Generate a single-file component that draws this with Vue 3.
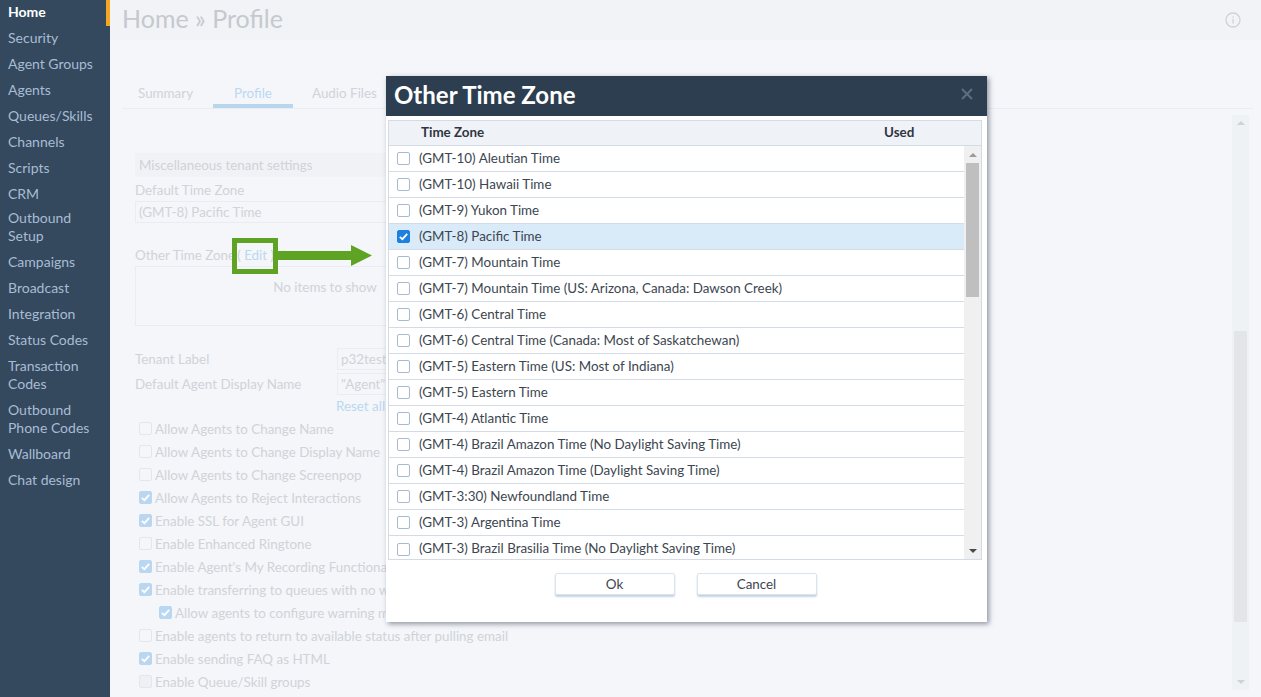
<script setup>
const navItems = [
  { label: 'Home', active: true },
  { label: 'Security' },
  { label: 'Agent Groups' },
  { label: 'Agents' },
  { label: 'Queues/Skills' },
  { label: 'Channels' },
  { label: 'Scripts' },
  { label: 'CRM' },
  { label: 'Outbound Setup', tight: true },
  { label: 'Campaigns' },
  { label: 'Broadcast' },
  { label: 'Integration' },
  { label: 'Status Codes' },
  { label: 'Transaction Codes' },
  { label: 'Outbound Phone Codes' },
  { label: 'Wallboard' },
  { label: 'Chat design' },
];

const options = [
  { label: 'Allow Agents to Change Name', on: false },
  { label: 'Allow Agents to Change Display Name', on: false },
  { label: 'Allow Agents to Change Screenpop', on: false },
  { label: 'Allow Agents to Reject Interactions', on: true },
  { label: 'Enable SSL for Agent GUI', on: true },
  { label: 'Enable Enhanced Ringtone', on: false },
  { label: "Enable Agent's My Recording Functionality", on: true },
  { label: 'Enable transferring to queues with no waiting agents', on: true },
  { label: 'Allow agents to configure warning message', on: true, nested: true },
  { label: 'Enable agents to return to available status after pulling email', on: false },
  { label: 'Enable sending FAQ as HTML', on: true },
  { label: 'Enable Queue/Skill groups', on: false, off: true },
];

const zones = [
  '(GMT-10) Aleutian Time',
  '(GMT-10) Hawaii Time',
  '(GMT-9) Yukon Time',
  '(GMT-8) Pacific Time',
  '(GMT-7) Mountain Time',
  '(GMT-7) Mountain Time (US: Arizona, Canada: Dawson Creek)',
  '(GMT-6) Central Time',
  '(GMT-6) Central Time (Canada: Most of Saskatchewan)',
  '(GMT-5) Eastern Time (US: Most of Indiana)',
  '(GMT-5) Eastern Time',
  '(GMT-4) Atlantic Time',
  '(GMT-4) Brazil Amazon Time (No Daylight Saving Time)',
  '(GMT-4) Brazil Amazon Time (Daylight Saving Time)',
  '(GMT-3:30) Newfoundland Time',
  '(GMT-3) Argentina Time',
  '(GMT-3) Brazil Brasilia Time (No Daylight Saving Time)',
];
const selectedZone = '(GMT-8) Pacific Time';
</script>

<template>
  <div class="app">
    <nav class="sidebar">
      <a v-for="item in navItems" :key="item.label" :class="['nav-item', { active: item.active, tight: item.tight }]">{{ item.label }}</a>
    </nav>

    <main class="main">
      <header class="topbar">
        <h1>Home » Profile</h1>
        <svg class="info" width="16" height="16" viewBox="0 0 16 16">
          <circle cx="8" cy="8" r="7" fill="none" stroke="#cfd2d6" stroke-width="1.3" />
          <rect x="7.4" y="7" width="1.3" height="4.5" fill="#cfd2d6" />
          <rect x="7.4" y="4.4" width="1.3" height="1.4" fill="#cfd2d6" />
        </svg>
      </header>

      <div class="tabs">
        <span class="tab first">Summary</span>
        <span class="tab current">Profile</span>
        <span class="tab last">Audio Files</span>
      </div>

      <div class="content">
        <section class="form">
          <div class="section-title">Miscellaneous tenant settings</div>
          <div class="label tz-label">Default Time Zone</div>
          <div class="input wide">(GMT-8) Pacific Time</div>

          <div class="other-label">
            <span>Other Time Zone</span>
            <span class="edit">( <a class="link">Edit</a> )</span>
          </div>
          <div class="empty-box">No items to show</div>

          <div class="field-row first">
            <span class="label">Tenant Label</span>
            <div class="input short">p32test</div>
          </div>
          <div class="field-row">
            <span class="label">Default Agent Display Name</span>
            <div class="input short">"Agent"</div>
          </div>
          <a class="link reset">Reset all</a>

          <ul class="options">
            <li v-for="opt in options" :key="opt.label" :class="{ nested: opt.nested }">
              <span :class="['box', { on: opt.on, off: opt.off }]">
                <svg v-if="opt.on" width="13" height="13" viewBox="0 0 13 13">
                  <path d="M2.8 6.8 5.4 9.2 10.2 3.9" fill="none" stroke="#fff" stroke-width="1.8" />
                </svg>
              </span>
              {{ opt.label }}
            </li>
          </ul>
        </section>

        <div class="page-scroll">
          <span class="arrow up"></span>
          <div class="page-track"><div class="page-thumb"></div></div>
          <span class="arrow down"></span>
        </div>
      </div>
    </main>

    <div class="callout"></div>
    <svg class="callout-arrow" width="96" height="21" viewBox="0 0 96 21">
      <path d="M0 6H75V0L96 10.5 75 21V15H0Z" fill="#5fa324" />
    </svg>

    <div class="modal">
      <div class="modal-head">
        <h2>Other Time Zone</h2>
        <svg class="close" width="12" height="12" viewBox="0 0 12 12">
          <path d="M1 1 11 11M11 1 1 11" stroke="#5f6e7e" stroke-width="2" />
        </svg>
      </div>
      <div class="grid">
        <div class="grid-head">
          <span class="col-zone">Time Zone</span>
          <span class="col-used">Used</span>
        </div>
        <div class="grid-body">
          <div class="rows">
            <div v-for="zone in zones" :key="zone" :class="['row', { selected: zone === selectedZone }]">
              <span class="check">
                <svg v-if="zone === selectedZone" width="13" height="13" viewBox="0 0 13 13">
                  <path d="M2.8 6.8 5.4 9.2 10.2 3.9" fill="none" stroke="#fff" stroke-width="1.8" />
                </svg>
              </span>
              <span class="zone-name">{{ zone }}</span>
            </div>
          </div>
          <div class="grid-scroll">
            <span class="arrow up dark"></span>
            <div class="grid-thumb"></div>
            <span class="arrow down dark"></span>
          </div>
        </div>
      </div>
      <div class="modal-foot">
        <button class="btn">Ok</button>
        <button class="btn">Cancel</button>
      </div>
    </div>
  </div>
</template>

<style>
html, body {
  margin: 0;
  overflow: hidden;
}
</style>

<style scoped>
.app {
  position: relative;
  display: flex;
  width: 1261px;
  height: 697px;
  overflow: hidden;
  background: #f4f6fa;
  font-family: Lato, "Noto Sans", sans-serif;
  font-size: 13.4px;
  color: #d0d3d7;
}
.sidebar {
  width: 110px;
  flex: none;
  background: #34495e;
  display: flex;
  flex-direction: column;
}
.nav-item {
  display: flex;
  align-items: center;
  box-sizing: border-box;
  min-height: 26px;
  padding: 3px 8px 5px;
  line-height: 18px;
  color: #a8bcd4;
  font-size: 14px;
}
.nav-item.tight {
  margin-top: -2px;
}
.nav-item.active {
  color: #fff;
  font-weight: 700;
  border-right: 4px solid #f5a623;
}
.main {
  flex: 1;
  min-width: 0;
  display: flex;
  flex-direction: column;
}
.topbar {
  height: 40px;
  background: #f1f3f7;
  display: flex;
  align-items: center;
  justify-content: space-between;
  padding: 0 20px 0 12px;
  flex: none;
}
.topbar h1 {
  margin: 0 0 4px;
  font-size: 25px;
  font-weight: 400;
  color: #c5c9ce;
}
.tabs {
  margin: 40px 8px 0 12px;
  height: 28px;
  display: flex;
  border-bottom: 1px solid #e9ecf1;
  flex: none;
  box-sizing: content-box;
}
.tab {
  padding-top: 4px;
  line-height: 18px;
  box-sizing: border-box;
}
.tab.first {
  width: 91px;
  padding-left: 16px;
}
.tab.current {
  color: #bcd8f0;
  width: 80px;
  text-align: center;
  border-bottom: 4px solid #b9d6ef;
}
.tab.last {
  padding-left: 19px;
}
.content {
  flex: 1;
  display: flex;
  min-height: 0;
  justify-content: space-between;
  padding: 5px 12px 0 25px;
}
.form {
  width: 500px;
  padding-top: 39px;
}
.section-title {
  height: 24px;
  line-height: 24px;
  background: #f0f2f6;
  padding-left: 4px;
  margin-bottom: 4px;
  width: 300px;
}
.label {
  line-height: 18px;
}
.tz-label {
  margin-bottom: 2px;
}
.input {
  box-sizing: border-box;
  height: 22px;
  line-height: 20px;
  border: 1px solid #e9ecf1;
  padding-left: 3px;
}
.wide {
  width: 300px;
}
.other-label {
  margin-top: 23px;
  line-height: 18px;
  display: flex;
  gap: 2px;
}
.link {
  color: #bcd8f0;
}
.empty-box {
  box-sizing: border-box;
  margin-top: 2px;
  width: 380px;
  height: 60px;
  border: 1px solid #e9ecf1;
  padding-top: 12px;
  text-align: center;
}
.field-row {
  display: grid;
  grid-template-columns: 202px 120px;
  margin-top: 3px;
  align-items: center;
}
.field-row.first {
  margin-top: 22px;
}
.reset {
  display: block;
  margin: 2px 0 0 201px;
  line-height: 18px;
}
.options {
  list-style: none;
  margin: 2px 0 0 4px;
  padding: 0;
}
.options li {
  display: flex;
  align-items: center;
  gap: 3px;
  height: 23px;
  white-space: nowrap;
}
.options li.nested {
  margin-left: 20px;
}
.box {
  box-sizing: border-box;
  width: 13px;
  height: 13px;
  border: 1px solid #e3e6eb;
  border-radius: 2px;
  flex: none;
  display: flex;
}
.box.on {
  background: #b9d7f1;
  border-color: #b9d7f1;
}
.box.on svg {
  margin: -1px;
}
.box.off {
  background: #eef0f4;
}
.page-scroll {
  width: 17px;
  background: #eff2f5;
  display: flex;
  flex-direction: column;
  align-items: center;
  height: 575px;
  margin-top: 1px;
}
.page-track {
  flex: 1;
  width: 100%;
  display: flex;
  flex-direction: column;
  justify-content: flex-end;
  padding-bottom: 52px;
  box-sizing: border-box;
}
.page-thumb {
  height: 291px;
  width: 13px;
  margin-left: 2px;
  background: #e3e5e9;
}
.arrow {
  display: block;
  width: 0;
  height: 0;
  border-left: 4px solid transparent;
  border-right: 4px solid transparent;
  flex: none;
  margin: 6px 0;
}
.arrow.up {
  border-bottom: 4px solid #cfd1d4;
}
.arrow.down {
  border-top: 4px solid #cfd1d4;
}
.arrow.up.dark {
  border-bottom-color: #9a9a9a;
}
.arrow.down.dark {
  border-top-color: #4a4a4a;
}
/* annotation drawn on top of the page */
.callout {
  position: absolute;
  left: 232px;
  top: 238px;
  width: 46px;
  height: 36px;
  box-sizing: border-box;
  border: 5px solid #5fa324;
}
.callout-arrow {
  position: absolute;
  left: 276px;
  top: 245px;
}
.modal {
  position: absolute;
  left: 386px;
  top: 76px;
  width: 601px;
  height: 546px;
  background: #fff;
  box-shadow: 2px 2px 5px rgba(60, 70, 85, 0.55);
  display: flex;
  flex-direction: column;
  color: #3c4650;
}
.modal-head {
  height: 40px;
  flex: none;
  background: #2c3e50;
  display: flex;
  align-items: center;
  justify-content: space-between;
  padding: 0 14px 0 8px;
}
.modal-head h2 {
  margin: 0 0 3px;
  color: #fff;
  font-size: 24px;
  font-weight: 700;
}
.close {
  margin-bottom: 4px;
}
.grid {
  margin: 4px 5px 0 2px;
  border: 1px solid #d3dce6;
  flex: none;
  height: 440px;
  box-sizing: border-box;
}
.grid-head {
  background: #eff2f7;
  border-bottom: 1px solid #d3dce6;
  display: flex;
  align-items: center;
  font-weight: 700;
  color: #2f3640;
  padding-bottom: 3px;
  box-sizing: border-box;
  height: 25px;
}
.col-zone {
  margin-left: 32px;
  width: 463px;
}
.grid-body {
  display: flex;
  height: 413px;
  overflow: hidden;
}
.rows {
  flex: 1;
  min-width: 0;
}
.row {
  box-sizing: border-box;
  height: 26px;
  display: flex;
  align-items: center;
  gap: 9px;
  padding-left: 8px;
  border-bottom: 1px solid #d3dce6;
  white-space: nowrap;
}
.row:last-child {
  border-bottom: 0;
}
.row.selected {
  background: #d9eaf8;
}
.zone-name {
  margin-bottom: 2px;
}
.check {
  box-sizing: border-box;
  width: 13px;
  height: 13px;
  border: 1px solid #a6bad3;
  border-radius: 2px;
  flex: none;
  display: flex;
}
.selected .check {
  background: #1d7fe0;
  border-color: #1d7fe0;
}
.check svg {
  margin: -1px;
}
.grid-scroll {
  width: 17px;
  background: #f0f0f0;
  flex: none;
  display: flex;
  flex-direction: column;
  align-items: center;
  justify-content: space-between;
}
.grid-thumb {
  width: 13px;
  height: 134px;
  background: #bfbfbf;
  margin-bottom: auto;
}
.grid-scroll .arrow.up {
  margin: 7px 0 6px;
}
.modal-foot {
  display: flex;
  justify-content: center;
  gap: 22px;
  padding-top: 13px;
  padding-right: 2px;
}
.btn {
  width: 120px;
  height: 22px;
  padding: 0;
  background: #fff;
  border: 1px solid #dbe3ec;
  border-radius: 2px;
  box-shadow: 0 2px 2px #c5d3e4;
  font: inherit;
  color: #3c4650;
}
</style>
